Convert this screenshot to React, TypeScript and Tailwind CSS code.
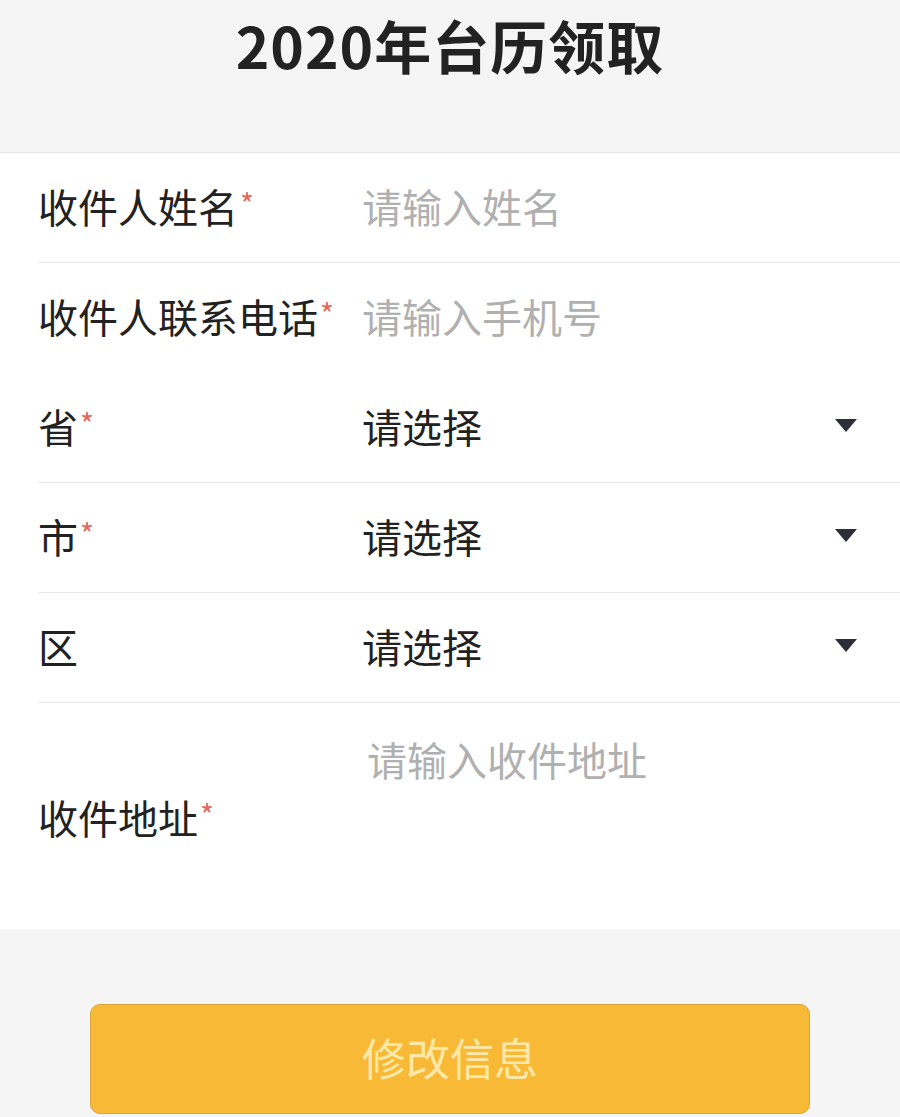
const cjk = { fontFamily: '"Noto Sans CJK SC", "Noto Sans", sans-serif' };

function Label({ text, required }: { text: string; required: boolean }) {
  return (
    <div className="flex items-start">
      <span className="text-[40px] leading-none">{text}</span>
      {required && <span className="ml-[2px] pt-[2px] text-[30px] leading-none text-[#e06a5e]">*</span>}
    </div>
  );
}

function Caret() {
  return (
    <svg width="22" height="13" viewBox="0 0 22 13" className="mr-[43px]">
      <path d="M0 0 H22 L11 13 Z" fill="#2e2e38" />
    </svg>
  );
}

type Row = { label: string; required: boolean; value: string; kind: "input" | "select"; line: boolean };

const rows: Row[] = [
  { label: "收件人姓名", required: true, value: "请输入姓名", kind: "input", line: true },
  { label: "收件人联系电话", required: true, value: "请输入手机号", kind: "input", line: false },
  { label: "省", required: true, value: "请选择", kind: "select", line: true },
  { label: "市", required: true, value: "请选择", kind: "select", line: true },
  { label: "区", required: false, value: "请选择", kind: "select", line: true },
];

export default function App() {
  return (
    <div className="min-h-[1117px] w-[900px] bg-[#f5f5f6] text-[#222]" style={cjk}>
      <header className="flex h-[152px] justify-center pt-[12px]">
        <h1 className="text-[57px] font-bold leading-[64px] tracking-[1px] text-[#222]">2020年台历领取</h1>
      </header>

      <section className="border-t border-[#e6e6e6] bg-white">
        {rows.map((r) => (
          <div key={r.label} className="pl-[38px]">
            <div className={`flex h-[110px] items-center pb-[4px] ${r.line ? "border-b border-[#e9e9e9]" : ""}`}>
              <div className="w-[324px]">
                <Label text={r.label} required={r.required} />
              </div>
              <span className={`flex-1 text-[40px] leading-none ${r.kind === "input" ? "text-[#b0b0b0]" : "text-[#222]"}`}>
                {r.value}
              </span>
              {r.kind === "select" && <Caret />}
            </div>
          </div>
        ))}

        <div className="flex h-[226px] pl-[38px]">
          <div className="flex w-[329px] items-center pt-[2px]">
            <Label text="收件地址" required />
          </div>
          <div className="pt-[36px] text-[40px] leading-none text-[#b0b0b0]">请输入收件地址</div>
        </div>
      </section>

      <div className="flex justify-center pt-[75px]">
        <button className="flex h-[110px] w-[720px] items-center justify-center rounded-[10px] border border-[#dba436] bg-[#f8b936] pb-[4px] text-[44px] text-[#fde8a8]" style={cjk}>
          修改信息
        </button>
      </div>
    </div>
  );
}
